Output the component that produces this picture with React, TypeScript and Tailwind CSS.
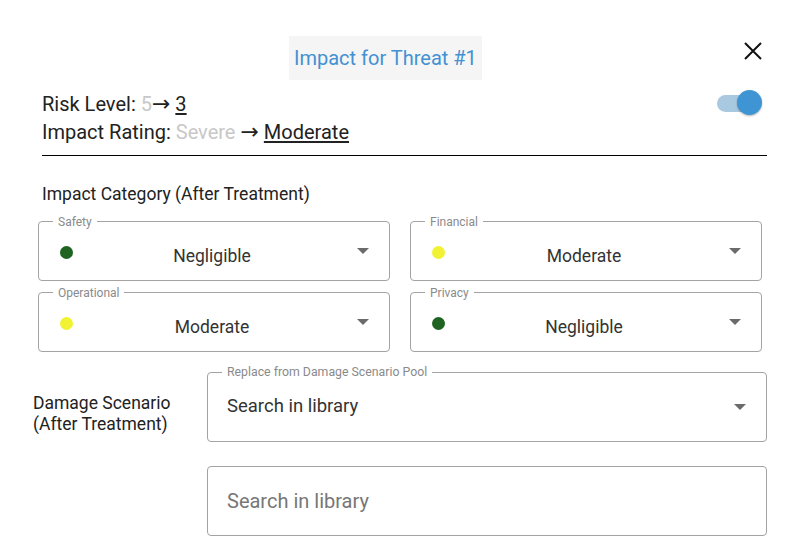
import React from 'react';

type Level = { label: string; value: string; dot: string };

const levels: Level[] = [
  { label: 'Safety', value: 'Negligible', dot: 'bg-[#1e6420]' },
  { label: 'Financial', value: 'Moderate', dot: 'bg-[#f2f235]' },
  { label: 'Operational', value: 'Moderate', dot: 'bg-[#f2f235]' },
  { label: 'Privacy', value: 'Negligible', dot: 'bg-[#1e6420]' },
];

const Caret: React.FC = () => (
  <svg width="12" height="6" viewBox="0 0 12 6" className="shrink-0">
    <path d="M0 0 L12 0 L6 6 Z" fill="#6b6b6b" />
  </svg>
);

const Arrow: React.FC = () => (
  <span className="font-['DejaVu_Sans',sans-serif] text-[22px] leading-none">→</span>
);

const CategorySelect: React.FC<{ item: Level }> = ({ item }) => (
  <div className="relative h-[60px] rounded-[4px] border border-[#a3a3a3] flex items-center pl-[20px] pr-[20px]">
    <span className="absolute -top-[7px] left-[14px] bg-white px-[5px] text-[12px] leading-[14px] text-[#8a8a8a]">
      {item.label}
    </span>
    <span className={`w-[13px] h-[13px] rounded-full ${item.dot} mt-[2px] ml-[1px]`} />
    <span className="flex-1 text-center text-[17.5px] text-[#333] pt-[10px] pr-[6px]">{item.value}</span>
    <Caret />
  </div>
);

export default function App() {
  return (
    <div className="w-[795px] h-[557px] bg-white font-['Roboto',sans-serif] text-[#222] overflow-hidden">
      {/* header */}
      <div className="flex items-start pt-[36px] pl-[289px] pr-[33px]">
        <div className="h-[44px] bg-[#f5f5f5] px-[5px] flex items-center text-[20px] text-[#4391d2]">
          Impact for Threat #1
        </div>
        <div className="flex-1" />
        <svg width="18" height="18" viewBox="0 0 18 18" className="mt-[6px]">
          <path d="M1 1 L17 17 M17 1 L1 17" stroke="#111" strokeWidth="2" />
        </svg>
      </div>

      {/* risk summary */}
      <div className="ml-[42px] mr-[28px] mt-[10px] pb-[9px] border-b border-black flex">
        <div className="flex-1 text-[20px] leading-[28px]">
          <div>
            Risk Level: <span className="text-[#c8c8c8]">5</span>
            <Arrow /> <span className="underline underline-offset-2">3</span>
          </div>
          <div>
            Impact Rating: <span className="text-[#c8c8c8]">Severe</span> <Arrow />{' '}
            <span className="underline underline-offset-2">Moderate</span>
          </div>
        </div>
        <div className="relative w-[45px] h-[26px] mr-[5px]">
          <div className="absolute left-0 top-[5px] w-[38px] h-[17px] rounded-full bg-[#a9c9e1]" />
          <div className="absolute right-0 top-0 w-[25px] h-[25px] rounded-full bg-[#3f95d3] shadow-[0_1px_2px_rgba(0,0,0,0.3)]" />
        </div>
      </div>

      {/* impact category */}
      <div className="ml-[42px] mt-[28px] text-[17.5px] leading-[20px]">
        Impact Category (After Treatment)
      </div>
      <div className="ml-[38px] w-[724px] mt-[17px] grid grid-cols-2 gap-x-[20px] gap-y-[11px]">
        {levels.map((l) => (
          <CategorySelect key={l.label} item={l} />
        ))}
      </div>

      {/* damage scenario */}
      <div className="mt-[20px] flex">
        <div className="w-[207px] pl-[33px] pt-[21px] text-[17.5px] leading-[21px]">
          Damage Scenario
          <br />
          (After Treatment)
        </div>
        <div className="w-[560px] flex flex-col gap-[24px]">
          <div className="relative h-[70px] rounded-[4px] border border-[#a3a3a3] flex items-center pl-[19px] pr-[20px]">
            <span className="absolute -top-[8px] left-[14px] bg-white px-[5px] text-[12.3px] leading-[14px] text-[#8a8a8a]">
              Replace from Damage Scenario Pool
            </span>
            <span className="flex-1 text-[18.5px] text-[#333]">Search in library</span>
            <Caret />
          </div>
          <div className="h-[70px] rounded-[4px] border border-[#a3a3a3] flex items-center pl-[19px]">
            <span className="text-[20px] text-[#777]">Search in library</span>
          </div>
        </div>
      </div>
    </div>
  );
}
